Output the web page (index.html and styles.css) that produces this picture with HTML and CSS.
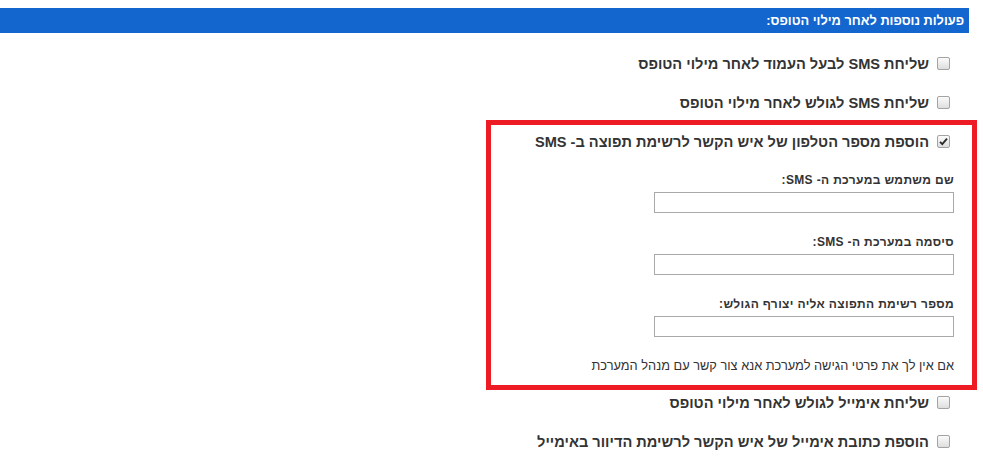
FILE: index.html
```html
<!DOCTYPE html>
<html lang="he" dir="rtl">
<head>
<meta charset="utf-8">
<title>פעולות נוספות</title>
<link rel="stylesheet" href="styles.css">
</head>
<body>
<div class="page">
  <div class="bar">פעולות נוספות לאחר מילוי הטופס:</div>

  <div class="opt"><span class="cb"></span><span class="opt-text">שליחת SMS לבעל העמוד לאחר מילוי הטופס</span></div>
  <div class="opt"><span class="cb"></span><span class="opt-text">שליחת SMS לגולש לאחר מילוי הטופס</span></div>

  <div class="group">
    <div class="opt"><span class="cb checked"><svg width="9" height="9" viewBox="0 0 9 9"><path d="M1 4.8 L3.3 7.2 L8 1.6" fill="none" stroke="#2b2b2b" stroke-width="1.8"/></svg></span><span class="opt-text">הוספת מספר הטלפון של איש הקשר לרשימת תפוצה ב- SMS</span></div>
    <div class="fields">
      <div class="field">
        <div class="label">שם משתמש במערכת ה- SMS:</div>
        <div class="input"></div>
      </div>
      <div class="field">
        <div class="label">סיסמה במערכת ה- SMS:</div>
        <div class="input"></div>
      </div>
      <div class="field">
        <div class="label">מספר רשימת התפוצה אליה יצורף הגולש:</div>
        <div class="input"></div>
      </div>
      <div class="note">אם אין לך את פרטי הגישה למערכת אנא צור קשר עם מנהל המערכת</div>
    </div>
  </div>

  <div class="opt"><span class="cb"></span><span class="opt-text">שליחת אימייל לגולש לאחר מילוי הטופס</span></div>
  <div class="opt"><span class="cb"></span><span class="opt-text">הוספת כתובת אימייל של איש הקשר לרשימת הדיוור באימייל</span></div>
</div>
</body>
</html>
```
FILE: styles.css
```css
html, body {
  margin: 0;
  padding: 0;
  background: #ffffff;
}

body {
  font-family: "Liberation Sans", Arial, sans-serif;
  color: #333333;
}

.page {
  padding: 8px 14px 0 0;
}

.bar {
  height: 25px;
  line-height: 25px;
  background: #1466cf;
  color: #ffffff;
  font-size: 12.8px;
  font-weight: bold;
  padding-right: 5px;
  margin-bottom: 11px;
}

.opt {
  display: flex;
  align-items: center;
  height: 39px;
  padding-right: 19px;
  gap: 8px;
}

.opt-text {
  font-size: 14.6px;
  font-weight: bold;
  color: #333333;
}

.cb {
  box-sizing: border-box;
  width: 13px;
  height: 13px;
  border: 1px solid #a3a3a3;
  border-radius: 2px;
  background: linear-gradient(#fbfbfb, #dedede);
  display: flex;
  align-items: center;
  justify-content: center;
  flex: none;
}

.group {
  position: relative;
}

.group::after {
  content: "";
  position: absolute;
  top: -2px;
  bottom: -16px;
  left: 486px;
  right: -8px;
  border: 5px solid #ed1c24;
  pointer-events: none;
}

.fields {
  padding-right: 15px;
  padding-top: 11px;
}

.field {
  display: flex;
  flex-direction: column;
  align-items: flex-start;
  margin-bottom: 21px;
}

.label {
  font-size: 12px;
  font-weight: bold;
  line-height: 16px;
  margin-bottom: 4px;
  letter-spacing: 0.35px;
}

.input {
  box-sizing: border-box;
  width: 300px;
  height: 21px;
  border: 1px solid #a9a9a9;
  background: #ffffff;
}

.fields .field:last-of-type {
  margin-bottom: 17px;
}

.note {
  font-size: 12.8px;
  line-height: 16px;
  margin-bottom: 9px;
}
```
